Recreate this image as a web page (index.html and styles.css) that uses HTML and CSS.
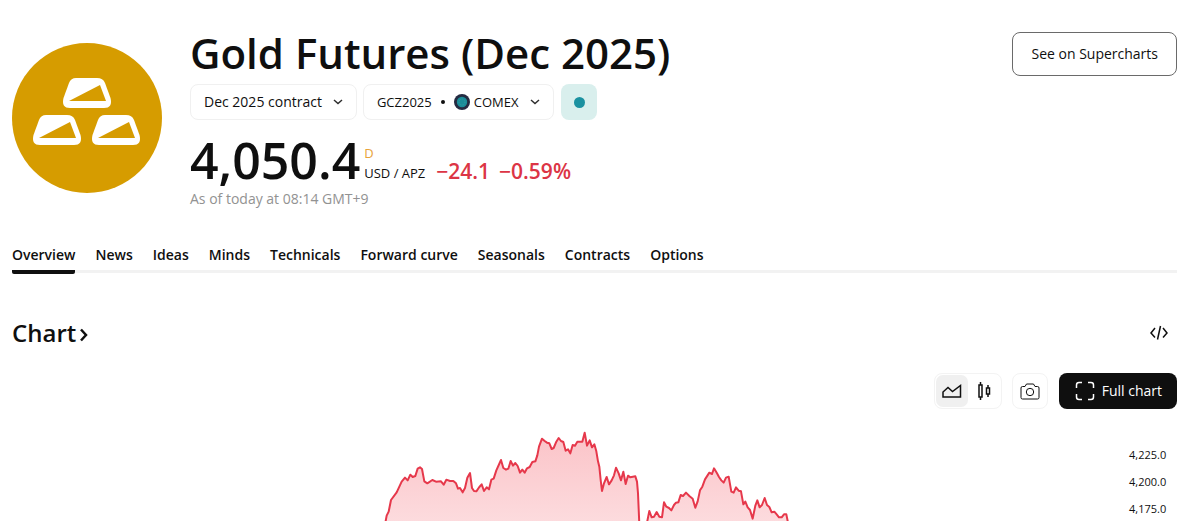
FILE: index.html
```html
<!DOCTYPE html>
<html lang="en">
<head>
<meta charset="utf-8">
<meta name="viewport" content="width=device-width, initial-scale=1">
<title>Gold Futures (Dec 2025)</title>
<link rel="stylesheet" href="styles.css">
</head>
<body>
<main class="page">
  <header class="symbol">
    <svg class="symbol-logo" viewBox="0 0 150 150" role="img" aria-label="Gold">
      <defs>
        <g id="bar">
          <path d="M13 0H34Q40 0 42 5L47.500 20Q50 30 41 30H7Q-2 30 .5 20L6 5Q8 0 13 0Z" fill="#fff"/>
          <path d="M6 23L37 7L43 23Z" fill="#d69c00"/>
        </g>
      </defs>
      <circle cx="75" cy="75" r="75" fill="#d69c00"/>
      <use href="#bar" x="51" y="35"/>
      <use href="#bar" x="21" y="72"/>
      <use href="#bar" x="80" y="72"/>
    </svg>
    <div class="symbol-info">
      <h1 class="symbol-title">Gold Futures (Dec 2025)</h1>
      <div class="pills">
        <button class="pill" type="button">Dec 2025 contract
          <svg class="caret" viewBox="0 0 10 6"><path d="M1 1L5 4.500L9 1"/></svg>
        </button>
        <button class="pill pill-exchange" type="button">
          <span>GCZ2025</span><span class="bullet"></span>
          <svg class="exchange-logo" viewBox="0 0 16 16"><circle cx="8" cy="8" r="8" fill="#252b42"/><circle cx="8" cy="8" r="5.200" fill="#1b8d99"/><circle cx="8" cy="8" r="3" fill="none" stroke="#45a5ad" stroke-width=".6" stroke-dasharray="1 1"/></svg>
          <span>COMEX</span>
          <svg class="caret" viewBox="0 0 10 6"><path d="M1 1L5 4.500L9 1"/></svg>
        </button>
        <button class="status" type="button" aria-label="Market status"><span class="status-dot"></span></button>
      </div>
      <div class="quote">
        <span class="price">4,050.4</span>
        <span class="unit"><span class="delay">D</span><span>USD / APZ</span></span>
        <span class="change"><span>−24.1</span><span>−0.59%</span></span>
      </div>
      <p class="as-of">As of today at 08:14 GMT+9</p>
    </div>
    <button class="supercharts" type="button">See on Supercharts</button>
  </header>

  <nav class="tabs">
    <a class="tab active" href="#overview">Overview</a>
    <a class="tab" href="#news">News</a>
    <a class="tab" href="#ideas">Ideas</a>
    <a class="tab" href="#minds">Minds</a>
    <a class="tab" href="#technicals">Technicals</a>
    <a class="tab" href="#forward">Forward curve</a>
    <a class="tab" href="#seasonals">Seasonals</a>
    <a class="tab" href="#contracts">Contracts</a>
    <a class="tab" href="#options">Options</a>
  </nav>

  <section class="chart-section">
    <div class="chart-head">
      <h2 class="chart-title"><a href="#chart">Chart<svg class="chevron" viewBox="0 0 8 14"><path d="M1 1.500L6 7L1 12.500"/></svg></a></h2>
      <button class="embed" type="button" aria-label="Embed"><svg class="line-icon" width="18" height="16" viewBox="0 0 18 16"><path d="M5 3L1 8L5 12.500M13 3L17 8L13 12.500M10.500 1L7.500 14.500"/></svg></button>
    </div>
    <div class="toolbar">
      <div class="chart-types">
        <button class="tool selected" type="button" aria-label="Area chart"><svg class="line-icon" width="20" height="16" viewBox="0 0 20 16"><path d="M1 14V9L6 4.500L10.500 8.500L18.500 2.500V14Z"/></svg></button>
        <button class="tool" type="button" aria-label="Candles"><svg class="line-icon" width="14" height="20" viewBox="0 0 14 20"><path d="M2 4H5V16H2ZM3.500 1V4M3.500 16V19M9.500 7H12.500V13H9.500ZM11 4V7M11 13V16"/></svg></button>
      </div>
      <button class="snapshot" type="button" aria-label="Snapshot"><svg class="line-icon thin" width="20" height="17" viewBox="0 0 20 17"><path d="M2.500 3.500H5L6.500 1H13.500L15 3.500H17.500Q19 3.500 19 5V14.500Q19 16 17.500 16H2.500Q1 16 1 14.500V5Q1 3.500 2.500 3.500Z"/><circle cx="10" cy="9" r="3.700"/></svg></button>
      <button class="full-chart" type="button"><svg class="line-icon" width="20" height="20" viewBox="0 0 20 20"><path d="M1.500 7V4Q1.500 1.500 4 1.500H7M13 1.500H16Q18.500 1.500 18.500 4V7M18.500 13V16Q18.500 18.500 16 18.500H13M7 18.500H4Q1.500 18.500 1.500 16V13"/></svg>Full chart</button>
    </div>
    <div class="chart">
      <svg class="plot" viewBox="-1074 15 3351 288" preserveAspectRatio="none" role="img" aria-label="Gold futures price">
        <defs>
          <linearGradient id="fade" x1="0" y1="36" x2="0" y2="700" gradientUnits="userSpaceOnUse"><stop offset="0" stop-color="#f23645" stop-opacity=".3"/><stop offset="1" stop-color="#f23645" stop-opacity="0"/></linearGradient>
          <path id="series" d="M43 330L47 303L50 287L56 275L63 240L80 217L95 185L105 173L113 181L121 164L128 171L136 168L143 146L150 142L156 147L163 184L172 190L187 180L198 185L213 184L221 194L229 179L240 183L250 183L258 190L264 206L270 204L278 217L285 204L292 173L300 159L306 204L312 213L319 214L328 201L335 193L342 213L350 202L357 208L364 179L371 176L379 151L393 120L400 144L408 149L415 146L422 123L429 137L436 129L443 138L450 158L457 149L464 158L471 145L479 141L487 126L496 124L502 106L507 80L516 56L524 63L531 68L538 70L545 87L551 84L559 65L566 54L573 63L580 66L587 92L594 88L601 100L608 75L615 77L622 65L637 65L644 38L651 77L659 61L666 82L673 73L679 94L684 124L688 140L692 180L696 213L702 190L710 171L717 193L725 181L732 166L738 143L746 160L753 181L760 155L767 192L774 167L781 172L796 169L801 185L804 220L807 290L810 360L828 360L832 303L838 273L845 292L852 290L860 276L868 290L876 292L882 247L889 260L897 264L904 271L912 255L918 248L925 247L932 225L939 228L948 218L958 228L968 236L976 263L983 244L990 211L997 200L1005 178L1018 158L1026 162L1032 145L1041 160L1047 171L1054 181L1061 188L1068 173L1076 170L1084 215L1091 218L1098 202L1106 212L1113 214L1120 253L1126 245L1133 262L1140 270L1148 296L1156 257L1162 241L1169 262L1176 255L1184 234L1191 255L1198 261L1205 277L1213 275L1220 283L1227 292L1235 292L1242 283L1249 283L1253 303L1257 330"/>
        </defs>
        <use href="#series" fill="url(#fade)"/>
        <use class="series-line" href="#series"/>
      </svg>
      <div class="axis"><span>4,225.0</span><span>4,200.0</span><span>4,175.0</span></div>
    </div>
  </section>
</main>
</body>
</html>
```
FILE: styles.css
```css
* { box-sizing: border-box; }
body {
  margin: 0;
  background: #fff;
  color: #0f0f0f;
  font-family: "Open Sans", "Noto Sans", sans-serif;
  font-size: 14px;
  line-height: 20px;
}
button {
  margin: 0;
  padding: 0;
  border: 0;
  background: none;
  color: inherit;
  font: inherit;
  cursor: pointer;
}
a { color: inherit; text-decoration: none; }
h1, h2, p { margin: 0; }
svg { display: block; flex: none; }
.page { padding: 28px 23px 0 12px; }

.symbol { display: flex; align-items: flex-start; }
.symbol-logo { width: 150px; height: 150px; margin: 15px 28px 0 0; }
.symbol-info { flex: 1; }
.symbol-title { font-size: 42px; line-height: 50px; font-weight: 600; white-space: nowrap; }
.pills { display: flex; gap: 6px; margin-top: 6px; }
.pill {
  display: flex;
  align-items: center;
  gap: 11px;
  height: 36px;
  padding: 0 13px;
  border: 1px solid #f0f0f0;
  border-radius: 8px;
  white-space: nowrap;
}
.pill-exchange { gap: 4px; font-size: 13px; }
.pill-exchange .caret { margin-left: 8px; }
.caret { width: 10px; height: 6px; fill: none; stroke: #2e2e2e; stroke-width: 1.5; }
.bullet { width: 4px; height: 4px; margin: 0 5px; border-radius: 50%; background: #0f0f0f; }
.exchange-logo { width: 16px; height: 16px; }
.status {
  display: grid;
  place-items: center;
  width: 36px;
  height: 36px;
  margin-left: 1px;
  border-radius: 8px;
  background: #d9efed;
}
.status-dot { width: 11px; height: 11px; border-radius: 50%; background: #1b91a0; }
.quote { display: flex; align-items: flex-end; margin-top: 15px; height: 50px; white-space: nowrap; }
.price { font-size: 50px; line-height: 50px; font-weight: 600; }
.unit { display: flex; flex-direction: column; margin: 0 0 2px 4px; font-size: 13px; }
.delay { color: #e8a33b; }
.change { display: flex; gap: 9px; margin-left: 11px; color: #dc3545; font-size: 21px; line-height: 28px; font-weight: 600; }
.as-of { color: #929292; line-height: 20px; margin-top: 4px; }
.supercharts {
  height: 44px;
  margin-top: 4px;
  padding: 0 18px;
  border: 1px solid #6a6a6a;
  border-radius: 8px;
}

.tabs { display: flex; gap: 20px; margin-top: 36px; border-bottom: 3px solid #f2f2f2; white-space: nowrap; }
.tab { height: 25px; font-weight: 600; }
.tab.active { height: 29px; margin-bottom: -4px; border-bottom: 4px solid #0f0f0f; border-radius: 2px; }

.chart-head { display: flex; align-items: center; justify-content: space-between; margin-top: 44px; padding-right: 9px; }
.chart-title { font-size: 24px; line-height: 32px; font-weight: 600; }
.chart-title a { display: flex; align-items: center; gap: 4px; }
.chevron { width: 8px; height: 14px; margin-top: 4px; fill: none; stroke: #0f0f0f; stroke-width: 2.5; }
.line-icon { fill: none; stroke: currentColor; stroke-width: 1.5; }
.line-icon.thin { stroke-width: 1; }
.toolbar { display: flex; justify-content: flex-end; margin-top: 24px; }
.chart-types { display: flex; padding: 1px; border: 1px solid #f3f3f3; border-radius: 8px; }
.tool { display: grid; place-items: center; width: 32px; height: 32px; border-radius: 7px; }
.tool.selected { background: #f0f0f0; }
.snapshot { display: grid; place-items: center; width: 36px; height: 36px; margin: 0 11px 0 10px; border: 1px solid #f3f3f3; border-radius: 8px; }
.full-chart {
  display: flex;
  align-items: center;
  gap: 7px;
  height: 36px;
  padding: 0 15px 0 16px;
  border-radius: 8px;
  background: #0f0f0f;
  color: #fff;
}
.chart { display: flex; margin-top: 16px; }
.plot { flex: 1; min-width: 0; height: 96px; }
.series-line { fill: none; stroke: #e6384b; stroke-width: 2px; stroke-linejoin: round; }
.series-line, #series { vector-effect: non-scaling-stroke; }
.axis { display: flex; flex-direction: column; gap: 9px; width: 48px; padding: 21px 12px 0 0; font-size: 11px; line-height: 18px; }
```
